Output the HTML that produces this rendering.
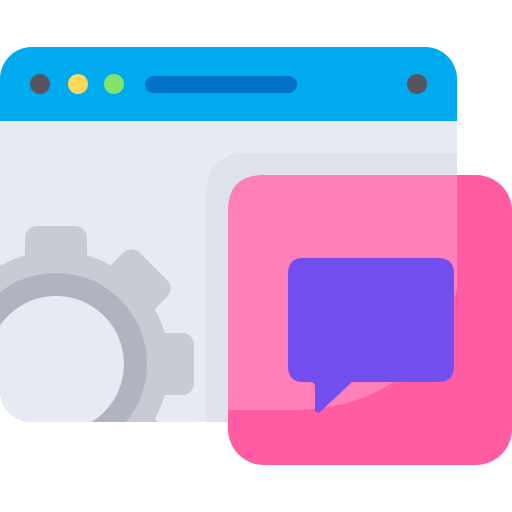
<!DOCTYPE html>
<html><head><style>html,body{margin:0;padding:0;background:#fff;width:512px;height:512px;overflow:hidden}</style></head>
<body>
<svg width="512" height="512" viewBox="0 0 512 512" xmlns="http://www.w3.org/2000/svg">
<defs>
<clipPath id="win"><rect x="0" y="47" width="457" height="375" rx="32"/></clipPath>
</defs>
<rect x="0" y="47" width="457" height="375" rx="32" fill="#e7eaf2"/>
<g clip-path="url(#win)">
<rect x="0" y="40" width="460" height="81" fill="#00aaee"/>
<path d="M206 422 V195 Q206 153 248 153 H460 V422 Z" fill="#dfe2ea"/>
<g transform="translate(56,364)" fill="#c8cbd3">
<circle r="113"/>
<g id="t"><rect x="-31" y="-138" width="62" height="40" rx="12"/></g>
<use href="#t" transform="rotate(45)"/>
<use href="#t" transform="rotate(90)"/>
<use href="#t" transform="rotate(135)"/>
<use href="#t" transform="rotate(180)"/>
<use href="#t" transform="rotate(225)"/>
<use href="#t" transform="rotate(270)"/>
<use href="#t" transform="rotate(315)"/>
<circle r="91" fill="#afb4c0"/>
<circle r="68" fill="#e7eaf2"/>
</g>
</g>
<circle cx="40" cy="84" r="10" fill="#57545f"/>
<circle cx="78" cy="84" r="10" fill="#fcd95c"/>
<circle cx="114" cy="84" r="10" fill="#86e36a"/>
<rect x="145" y="76" width="152" height="17" rx="8.5" fill="#0073c8"/>
<circle cx="417" cy="84" r="10" fill="#57545f"/>
<rect x="228" y="175" width="284" height="290" rx="36" fill="#ff5ca4"/>
<path d="M228 410 V211 Q228 175 264 175 H457 V290 Q420 405 300 410 Z" fill="#ff80b8"/>
<path d="M303 258 H438 Q454 258 454 274 V366 Q454 382 438 382 H352 L320 412 Q316 414 315 410 V387 Q315 382 310 382 H303 Q288 382 288 366 V274 Q288 258 303 258 Z" fill="#734ff0"/>
</svg>
</body></html>
